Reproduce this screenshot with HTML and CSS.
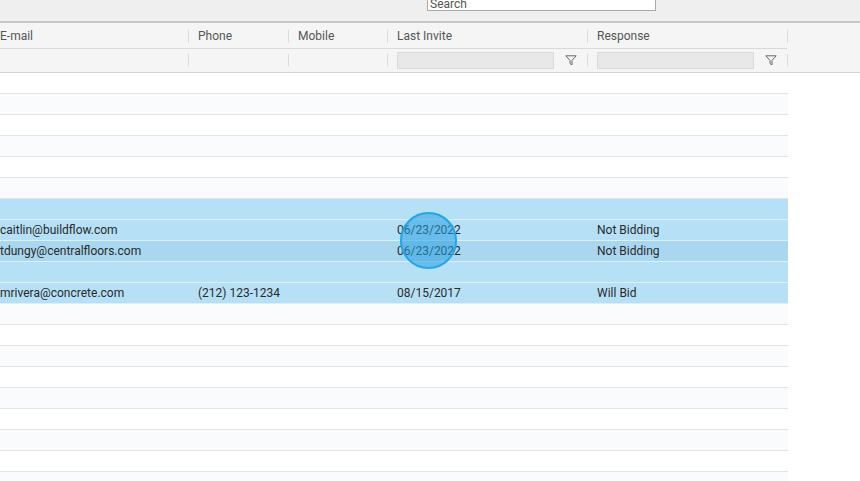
FILE: index.html
```html
<!DOCTYPE html>
<html lang="en">
<head>
    <meta charset="UTF-8">
    <title>Invitees</title>
    <link rel="stylesheet" href="styles.css">
</head>
<body>
    <div class="toolbar">
        <input type="text" class="search" placeholder="Search">
    </div>

    <div class="grid">
        <!-- column headers -->
        <div class="head-row">
            <div class="cell c-email">E-mail</div>
            <div class="cell c-phone">Phone</div>
            <div class="cell c-mobile">Mobile</div>
            <div class="cell c-invite">Last Invite</div>
            <div class="cell c-resp">Response</div>
        </div>
        <!-- filters -->
        <div class="filter-row">
            <div class="cell c-email"></div>
            <div class="cell c-phone"></div>
            <div class="cell c-mobile"></div>
            <div class="cell c-invite">
                <div class="filter-box"></div>
                <svg class="funnel" width="12" height="11" viewBox="0 0 12 11"><path d="M0.8 0.8 H11.2 L7 5.4 V9.8 L5 8.6 V5.4 Z" fill="none" stroke="#6a6a6a" stroke-width="1"/></svg>
            </div>
            <div class="cell c-resp">
                <div class="filter-box"></div>
                <svg class="funnel" width="12" height="11" viewBox="0 0 12 11"><path d="M0.8 0.8 H11.2 L7 5.4 V9.8 L5 8.6 V5.4 Z" fill="none" stroke="#6a6a6a" stroke-width="1"/></svg>
            </div>
        </div>

        <div class="rows" id="rows"></div>
    </div>

    <div class="click-dot"></div>

    <script>
        const data = [
            {}, {}, {}, {}, {}, {},
            { sel: true },
            { sel: true, email: 'caitlin@buildflow.com', invite: '06/23/2022', resp: 'Not Bidding' },
            { sel: true, hover: true, email: 'tdungy@centralfloors.com', invite: '06/23/2022', resp: 'Not Bidding' },
            { sel: true },
            { sel: true, email: 'mrivera@concrete.com', phone: '(212) 123-1234', invite: '08/15/2017', resp: 'Will Bid' },
            {}, {}, {}, {}, {}, {}, {}, {}, {}
        ];

        const rows = document.getElementById('rows');
        data.forEach(function (d, i) {
            const row = document.createElement('div');
            row.className = 'row' + (i % 2 ? ' alt' : '') + (d.sel ? ' selected' : '') + (d.hover ? ' hover' : '');
            row.innerHTML =
                '<div class="cell c-email">' + (d.email || '') + '</div>' +
                '<div class="cell c-phone">' + (d.phone || '') + '</div>' +
                '<div class="cell c-mobile"></div>' +
                '<div class="cell c-invite">' + (d.invite || '') + '</div>' +
                '<div class="cell c-resp">' + (d.resp || '') + '</div>';
            rows.appendChild(row);
        });
    </script>
</body>
</html>
```

FILE: styles.css
```css
body {
    margin: 0;
    font-family: Roboto, 'Liberation Sans', Arial, sans-serif;
    font-size: 12px;
    color: #333;
    background: #fff;
    overflow: hidden;
    height: 481px;
    position: relative;
}
.toolbar {
    height: 21px;
    background-color: #efefef;
    border-bottom: 2px solid #c6c6c6;
    position: relative;
    overflow: hidden;
}
.search {
    position: absolute;
    left: 427px;
    top: -11px;
    width: 229px;
    height: 22px;
    box-sizing: border-box;
    border: 1px solid #a9a9a9;
    background: #fff;
    padding: 0 2px;
    font-family: Roboto, 'Liberation Sans', Arial, sans-serif;
    font-size: 12px;
    padding-top: 7px;
    color: #555;
}
.search::placeholder {
    color: #555;
}
.grid {
    width: 860px;
}
.head-row, .filter-row, .row {
    display: flex;
}
.cell {
    box-sizing: border-box;
    padding-left: 10px;
    white-space: nowrap;
    position: relative;
}
.row .cell {
    overflow: hidden;
}
.c-email { width: 188px; padding-left: 0; }
.c-phone { width: 100px; }
.c-mobile { width: 99px; }
.c-invite { width: 200px; }
.c-resp { width: 200px; }

.head-row {
    height: 26px;
    background-color: #f4f5f4;
    color: #555;
}
.head-row .cell {
    height: 26px;
    padding-top: 2px;
    line-height: 23px;
    border-bottom: 1px solid #d8d9d8;
}
.head-row .cell::after, .filter-row .cell::after {
    content: "";
    position: absolute;
    right: -1px;
    top: 7px;
    height: 13px;
    border-right: 1px solid #dcdcdc;
}
.filter-row {
    height: 23px;
    background-color: #f4f5f4;
    border-bottom: 1px solid #d4d4d4;
}
.filter-row .cell::after {
    top: 5px;
    height: 12px;
}
.filter-box {
    margin-top: 3px;
    width: 157px;
    height: 17px;
    box-sizing: border-box;
    background-color: #e8e8e8;
    border: 1px solid #dadada;
}
.funnel {
    position: absolute;
    left: 178px;
    top: 6px;
}
.row {
    width: 788px;
    height: 20px;
    line-height: 20px;
    border-bottom: 1px solid #e2e3e4;
    background-color: #fff;
}
.row.alt {
    background-color: #f9fbfd;
}
.row.selected {
    background-color: #b5e0f6;
    border-bottom-color: #dcf0fb;
    color: #2a2a2a;
}
.row.hover {
    background-color: #a9d7f0;
}
.click-dot {
    position: absolute;
    left: 400px;
    top: 212px;
    width: 53px;
    height: 53px;
    border-radius: 50%;
    border: 2px solid #23a6e6;
    background-color: rgba(40, 160, 225, 0.55);
}
```
